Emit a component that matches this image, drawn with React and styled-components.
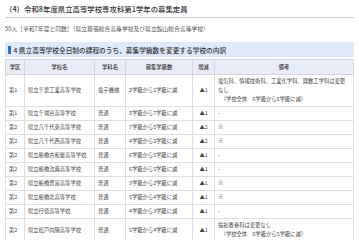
import React from "react"
import styled, { createGlobalStyle } from "styled-components"

const Global = createGlobalStyle`
  body {
    margin: 0;
    background: #fff;
    font-family: "Noto Sans CJK JP", "Noto Sans", sans-serif;
    color: #333;
  }
`

const Page = styled.div`
  padding: 4px 5px 0;
`

const Title = styled.h3`
  margin: 0;
  font-size: 7.4px;
  font-weight: 500;
  line-height: 10px;
  padding-bottom: 3px;
  border-bottom: 1px solid #cfcfcf;
  color: #333;
`

const Note = styled.p`
  margin: 7px 0 0;
  font-size: 5.8px;
  line-height: 8px;
  color: #555;
`

const Band = styled.h4`
  margin: 9px 0 0;
  height: 15px;
  display: flex;
  align-items: center;
  gap: 3px;
  background: #dfe9fa;
  font-size: 6.7px;
  font-weight: 500;
  color: #333;
  padding-left: 3px;
  &::before {
    content: "";
    width: 2.5px;
    height: 8px;
    background: #2371d9;
  }
`

const Table = styled.table`
  margin-top: 2px;
  width: 349px;
  border-collapse: collapse;
  table-layout: fixed;
  font-size: 5.3px;
  line-height: 9px;
  color: #444;
`

const Th = styled.th`
  background: #e9edf8;
  border: 1px solid #d6d6d6;
  font-weight: 500;
  color: #333;
  padding: 2.5px 3px;
  text-align: center;
`

const Td = styled.td`
  border: 1px solid #dedede;
  padding: 2px 3px;
  vertical-align: middle;
  text-align: ${p => (p.center ? "center" : "left")};
`

const Line = styled.span`
  display: block;
  padding-left: ${p => (p.indent ? "0.5em" : "0")};
`

const rows = [
  ["第1", "県立千葉工業高等学校", "電子機械", "2学級から1学級に減", "▲1", ["電気科、情報技術科、工業化学科、理数工学科は変更なし", "（学校全体　6学級から5学級に減）"]],
  ["第1", "県立千城台高等学校", "普通", "8学級から7学級に減", "▲1", ["-"]],
  ["第2", "県立八千代東高等学校", "普通", "7学級から5学級に減", "▲2", ["※"]],
  ["第2", "県立八千代西高等学校", "普通", "4学級から2学級に減", "▲2", ["※"]],
  ["第2", "県立船橋古和釜高等学校", "普通", "6学級から5学級に減", "▲1", ["-"]],
  ["第2", "県立船橋法典高等学校", "普通", "6学級から5学級に減", "▲1", ["-"]],
  ["第2", "県立船橋豊富高等学校", "普通", "3学級から2学級に減", "▲1", ["※"]],
  ["第2", "県立船橋北高等学校", "普通", "5学級から4学級に減", "▲1", ["※"]],
  ["第2", "県立行徳高等学校", "普通", "4学級から3学級に減", "▲1", ["-"]],
  ["第2", "県立松戸向陽高等学校", "普通", "5学級から4学級に減", "▲1", ["福祉教養科は変更なし", "（学校全体　6学級から5学級に減）"]],
]

export default function App() {
  return (
    <Page>
      <Global />
      <Title>（4）令和8年度県立高等学校専攻科第1学年の募集定員</Title>
      <Note>50人［令和7年度と同数］（県立幕張総合高等学校及び県立館山総合高等学校）</Note>
      <Band>4 県立高等学校全日制の課程のうち、募集学級数を変更する学校の内訳</Band>
      <Table>
        <colgroup>
          <col style={{ width: 19 }} />
          <col style={{ width: 70 }} />
          <col style={{ width: 31 }} />
          <col style={{ width: 67 }} />
          <col style={{ width: 22 }} />
          <col />
        </colgroup>
        <thead>
          <tr>
            <Th>学区</Th>
            <Th>学校名</Th>
            <Th>学科名</Th>
            <Th>募集学級数</Th>
            <Th>増減</Th>
            <Th>備考</Th>
          </tr>
        </thead>
        <tbody>
          {rows.map(r => (
            <tr key={r[1]}>
              <Td>{r[0]}</Td>
              <Td>{r[1]}</Td>
              <Td>{r[2]}</Td>
              <Td>{r[3]}</Td>
              <Td center>{r[4]}</Td>
              <Td>
                {r[5].map((t, i) => (
                  <Line key={i} indent={t.startsWith("（")}>{t}</Line>
                ))}
              </Td>
            </tr>
          ))}
        </tbody>
      </Table>
    </Page>
  )
}
